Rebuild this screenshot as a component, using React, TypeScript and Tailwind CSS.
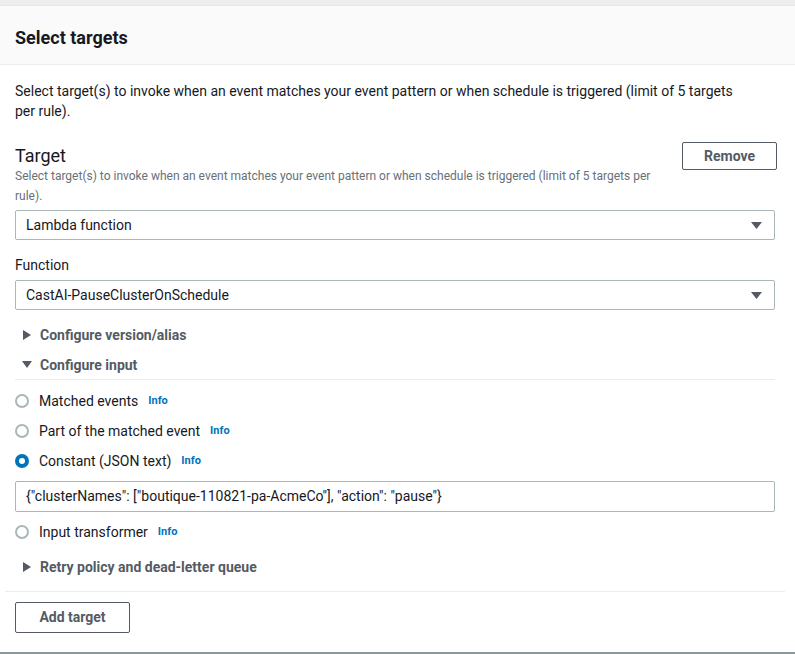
import React from 'react';

const font = { fontFamily: 'Roboto, "Noto Sans", sans-serif' };

function Caret({ dir }: { dir: 'right' | 'down' }) {
  return dir === 'right' ? (
    <svg width="8" height="10" viewBox="0 0 8 10" className="shrink-0">
      <path d="M0 0 L8 5 L0 10 Z" fill="#545b64" />
    </svg>
  ) : (
    <svg width="10" height="8" viewBox="0 0 10 8" className="shrink-0">
      <path d="M0 0 L10 0 L5 7 Z" fill="#545b64" />
    </svg>
  );
}

function Select({ value }: { value: string }) {
  return (
    <div className="h-[30px] flex items-center justify-between border border-[#aab7b8] rounded-[2px] pl-[10px] pr-[12px] text-[14px] text-[#16191f] bg-white">
      <span>{value}</span>
      <svg width="11" height="7" viewBox="0 0 11 7">
        <path d="M0 0 L11 0 L5.5 7 Z" fill="#545b64" />
      </svg>
    </div>
  );
}

function Expander({ label, open }: { label: string; open?: boolean }) {
  return (
    <div className="h-[20px] flex items-center gap-[8px] pl-[7px] text-[14px] font-bold text-[#545b64]">
      <span className="w-[10px] flex justify-center">
        <Caret dir={open ? 'down' : 'right'} />
      </span>
      <span>{label}</span>
    </div>
  );
}

function Radio({ label, checked }: { label: string; checked?: boolean }) {
  return (
    <div className="h-[20px] flex items-center text-[14px] text-[#16191f]">
      {checked ? (
        <span className="w-[14px] h-[14px] rounded-full bg-[#0073bb] flex items-center justify-center">
          <span className="w-[6px] h-[6px] rounded-full bg-white" />
        </span>
      ) : (
        <span className="w-[14px] h-[14px] rounded-full border-2 border-[#aab7b8] bg-white" />
      )}
      <span className="ml-[10px]">{label}</span>
      <span className="ml-[10px] text-[11px] font-bold text-[#0073bb]">Info</span>
    </div>
  );
}

export default function App() {
  return (
    <div className="w-[795px] h-[654px] bg-white overflow-hidden" style={font}>
      <div className="h-[6px] bg-[#eceeee] border-b border-[#e4e8e8]" />
      <div className="h-[59px] bg-[#fafafa] border-b border-[#eaeded] px-[15px] pt-[6px] flex items-center">
        <h2 className="text-[18px] font-bold text-[#16191f] leading-[22px]">Select targets</h2>
      </div>

      <div className="pl-[15px] pr-[20px]">
        <p className="pt-[16px] max-w-[735px] text-[14px] leading-[20px] text-[#16191f]">
          Select target(s) to invoke when an event matches your event pattern or when schedule is triggered (limit of 5 targets per rule).
        </p>

        <div className="mt-[25px] flex items-start">
          <div className="flex-1 pr-[8px]">
            <div className="text-[18px] leading-[20px] text-[#16191f]">Target</div>
            <div className="text-[12px] leading-[20px] text-[#687078] max-w-[665px]">
              Select target(s) to invoke when an event matches your event pattern or when schedule is triggered (limit of 5 targets per rule).
            </div>
          </div>
          <button className="-mt-[4px] -mr-[2px] w-[95px] h-[28px] border border-[#545b64] rounded-[2px] text-[14px] font-bold text-[#545b64] bg-white">
            Remove
          </button>
        </div>

        <div className="mt-[4px]">
          <Select value="Lambda function" />
        </div>

        <div className="mt-[15px] text-[14px] leading-[20px] text-[#16191f]">Function</div>
        <div className="mt-[5px]">
          <Select value="CastAI-PauseClusterOnSchedule" />
        </div>

        <div className="mt-[15px]">
          <Expander label="Configure version/alias" />
        </div>
        <div className="mt-[10px]">
          <Expander label="Configure input" open />
        </div>
        <div className="mt-[4px] border-b border-[#eaeded]" />

        <div className="mt-[11px] flex flex-col gap-[10px]">
          <Radio label="Matched events" />
          <Radio label="Part of the matched event" />
          <Radio label="Constant (JSON text)" checked />
          <div className="h-[31px] flex items-center border border-[#aab7b8] rounded-[2px] px-[10px] text-[14px] text-[#16191f]">
            {'{"clusterNames": ["boutique-110821-pa-AcmeCo"], "action": "pause"}'}
          </div>
          <Radio label="Input transformer" />
        </div>

        <div className="mt-[15px]">
          <Expander label="Retry policy and dead-letter queue" />
        </div>
      </div>

      <div className="ml-[5px] mr-[10px] mt-[14px] border-b border-[#eaeded]" />

      <div className="px-[15px] pt-[10px] h-[60px]">
        <button className="w-[115px] h-[31px] border border-[#545b64] rounded-[2px] text-[14px] font-bold text-[#545b64] bg-white">
          Add target
        </button>
      </div>
      <div className="h-[2px] bg-[#8a9a9b]" />
    </div>
  );
}
